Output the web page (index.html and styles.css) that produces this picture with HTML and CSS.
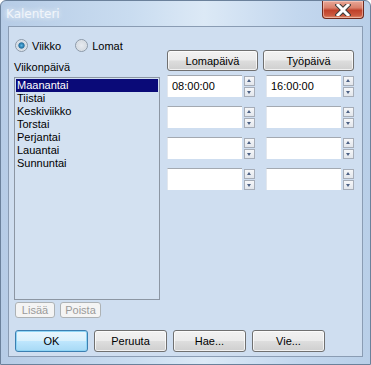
FILE: index.html
```html
<!DOCTYPE html>
<html>
<head>
<meta charset="utf-8">
<title>Kalenteri</title>
<link rel="stylesheet" href="styles.css">
</head>
<body>
<div class="window">
	<div class="titlebar">
		<span class="title">Kalenteri</span>
		<span class="close">
			<svg width="16" height="12" viewBox="0 0 16 12">
				<path d="M3 1 L13 11 M13 1 L3 11" stroke="#3a3a3a" stroke-width="5" stroke-linecap="square"/>
				<path d="M3 1 L13 11 M13 1 L3 11" stroke="#ffffff" stroke-width="3" stroke-linecap="square"/>
			</svg>
		</span>
	</div>
	<div class="client">
		<div class="main">
			<div class="left">
				<div class="radios">
					<label class="radio checked"><span class="dot"></span>Viikko</label>
					<label class="radio"><span class="dot"></span>Lomat</label>
				</div>
				<div class="caption">Viikonpäivä</div>
				<ul class="list">
					<li class="selected">Maanantai</li>
					<li>Tiistai</li>
					<li>Keskiviikko</li>
					<li>Torstai</li>
					<li>Perjantai</li>
					<li>Lauantai</li>
					<li>Sunnuntai</li>
				</ul>
				<div class="small-buttons">
					<button class="btn small" disabled>Lisää</button>
					<button class="btn small" disabled>Poista</button>
				</div>
			</div>
			<div class="right">
				<div class="row">
					<button class="btn wide">Lomapäivä</button>
					<button class="btn wide">Työpäivä</button>
				</div>
				<div class="row">
					<div class="spin"><div class="field">08:00:00</div><div class="arrows"><span class="up"></span><span class="down"></span></div></div>
					<div class="spin"><div class="field">16:00:00</div><div class="arrows"><span class="up"></span><span class="down"></span></div></div>
				</div>
				<div class="row">
					<div class="spin"><div class="field"></div><div class="arrows"><span class="up"></span><span class="down"></span></div></div>
					<div class="spin"><div class="field"></div><div class="arrows"><span class="up"></span><span class="down"></span></div></div>
				</div>
				<div class="row">
					<div class="spin"><div class="field"></div><div class="arrows"><span class="up"></span><span class="down"></span></div></div>
					<div class="spin"><div class="field"></div><div class="arrows"><span class="up"></span><span class="down"></span></div></div>
				</div>
				<div class="row">
					<div class="spin"><div class="field"></div><div class="arrows"><span class="up"></span><span class="down"></span></div></div>
					<div class="spin"><div class="field"></div><div class="arrows"><span class="up"></span><span class="down"></span></div></div>
				</div>
			</div>
		</div>
		<div class="footer">
			<button class="btn big default">OK</button>
			<button class="btn big">Peruuta</button>
			<button class="btn big">Hae...</button>
			<button class="btn big">Vie...</button>
		</div>
	</div>
</div>
</body>
</html>
```

FILE: styles.css
```css
body {
	margin: 0;
	font-family: "Liberation Sans", Tahoma, sans-serif;
	font-size: 11px;
	color: #000;
	background: #fff;
}

.window {
	width: 371px;
	height: 365px;
	box-sizing: border-box;
	background: linear-gradient(90deg, #b6cce6 0%, #c9dcf0 35%, #dce9f6 55%, #c3d7ee 80%, #b9cfe8 100%);
	border: 1px solid #6b819b;
	border-radius: 6px 6px 0 0;
	padding: 0 7px 7px 7px;
	display: flex;
	flex-direction: column;
}

.titlebar {
	height: 25px;
	display: flex;
	justify-content: space-between;
	align-items: flex-start;
}

.title {
	color: #ffffff;
	font-family: "DejaVu Sans", sans-serif;
	font-size: 12px;
	margin-top: 6px;
	margin-left: -2px;
	text-shadow: 0 0 4px #eaf2fb, 0 0 6px #eaf2fb;
	opacity: 0.8;
}

.close {
	width: 42px;
	height: 18px;
	margin-right: -1px;
	box-sizing: border-box;
	border: 1px solid #6e2a1e;
	border-top: none;
	border-radius: 0 0 4px 4px;
	background: linear-gradient(180deg, #e9a898 0%, #d9806b 40%, #c0412a 55%, #cc5a40 85%, #e09070 100%);
	display: flex;
	align-items: center;
	justify-content: center;
	box-shadow: inset 0 0 0 1px rgba(255, 220, 210, 0.5);
}

.client {
	flex: 1;
	background: #cfdef0;
	border: 1px solid #8a9cb3;
	padding: 12px 8px 0 5px;
	display: flex;
	flex-direction: column;
}

.main {
	display: flex;
	gap: 7px;
}

.left {
	width: 146px;
	display: flex;
	flex-direction: column;
}

.radios {
	display: flex;
	gap: 14px;
	height: 13px;
	align-items: center;
	padding-left: 1px;
}

.radio {
	display: flex;
	align-items: center;
	gap: 4px;
}

.dot {
	width: 11px;
	height: 11px;
	border-radius: 50%;
	border: 1px solid #8c99a8;
	background: radial-gradient(circle, #e7ebf0 0%, #d8dde3 60%, #f4f6f8 100%);
}

.radio.checked .dot {
	background: radial-gradient(circle, #5db8e8 0%, #1f6d9e 35%, #cfd8e2 45%, #f0f3f6 100%);
}

.caption {
	margin-top: 9px;
	height: 16px;
	line-height: 13px;
}

.list {
	list-style: none;
	margin: 0;
	padding: 1px;
	height: 223px;
	box-sizing: border-box;
	border: 1px solid #8c96a3;
	background: #d3e1f1;
}

.list li {
	height: 13px;
	line-height: 13px;
	padding-left: 1px;
}

.list li.selected {
	background: #0a0a78;
	color: #fff;
}

.small-buttons {
	display: flex;
	gap: 5px;
	margin-top: 2px;
	padding-left: 1px;
}

.btn {
	font-family: "Liberation Sans", Tahoma, sans-serif;
	font-size: 11px;
	color: #000;
	border: 1px solid #707070;
	border-radius: 3px;
	background: linear-gradient(180deg, #f2f2f2 0%, #ebebeb 48%, #dddddd 52%, #cfcfcf 100%);
	box-shadow: inset 0 0 0 1px rgba(255, 255, 255, 0.7);
	padding: 0;
	margin: 0;
}

.btn.small {
	height: 16px;
	width: 40px;
	color: #9a9a9a;
	border-color: #adb2b5;
	background: #f4f4f4;
	box-shadow: none;
}

.btn.small + .btn.small {
	width: 41px;
}

.right {
	width: 187px;
	display: flex;
	flex-direction: column;
	gap: 9px;
	padding-top: 11px;
}

.row {
	display: flex;
	justify-content: space-between;
}

.row + .row {
	margin-top: -5px;
}

.row + .row + .row {
	margin-top: 0;
}

.btn.wide {
	width: 91px;
	height: 21px;
}

.spin {
	width: 88px;
	display: flex;
	justify-content: space-between;
	gap: 2px;
}

.field {
	flex: 1;
	height: 22px;
	box-sizing: border-box;
	background: #fff;
	border-top: 1px solid #a3a9b1;
	border-left: 1px solid #e2e7ee;
	padding: 4px 0 0 4px;
}

.arrows {
	width: 11px;
	display: flex;
	flex-direction: column;
	gap: 1px;
	padding-top: 1px;
}

.arrows span {
	height: 10px;
	box-sizing: border-box;
	border: 1px solid #a6adb8;
	background: linear-gradient(180deg, #f6f7f9, #e2e6ec);
	position: relative;
}

.arrows span::after {
	content: "";
	position: absolute;
	left: 2px;
	width: 0;
	height: 0;
	border-left: 2.5px solid transparent;
	border-right: 2.5px solid transparent;
}

.arrows .up::after {
	top: 2px;
	border-bottom: 3px solid #4d6185;
}

.arrows .down::after {
	top: 3px;
	border-top: 3px solid #4d6185;
}

.footer {
	display: flex;
	gap: 6px;
	margin-top: 12px;
	padding-left: 1px;
}

.btn.big {
	width: 73px;
	height: 22px;
}

.btn.default {
	border-color: #3c7fb1;
	box-shadow: inset 0 0 0 1px #90d5f5;
	background: linear-gradient(180deg, #eaf6fd 0%, #d9f0fc 48%, #bee6fd 52%, #a7d9f5 100%);
}
```
